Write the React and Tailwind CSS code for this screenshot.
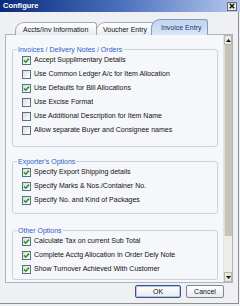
const groups = [
  {
    title: 'Invoices / Delivery Notes / Orders',
    mt: 'mt-[14px]',
    h: 'h-[98px]',
    rows: [
      ['Accept Supplimentary Details', true],
      ['Use Common Ledger A/c for Item Allocation', false],
      ['Use Defaults for Bill Allocations', true],
      ['Use Excise Format', false],
      ['Use Additional Description for Item Name', false],
      ['Allow separate Buyer and Consignee names', false],
    ],
  },
  {
    title: "Exporter's Options",
    mt: 'mt-[14px]',
    h: 'h-[53px]',
    rows: [
      ['Specify Export Shipping details', true],
      ['Specify Marks & Nos./Container No.', true],
      ['Specify No. and Kind of Packages', true],
    ],
  },
  {
    title: 'Other Options',
    mt: 'mt-[16px]',
    h: 'h-[50px]',
    rows: [
      ['Calculate Tax on current Sub Total', true],
      ['Complete Acctg Allocation In Order Dely Note', true],
      ['Show Turnover Achieved With Customer', true],
    ],
  },
];

const CheckBox = ({ checked }) => (
  <span className="w-[9px] h-[9px] border border-[#5a6f88] bg-gradient-to-br from-[#dcdcd6] to-white flex items-center justify-center shrink-0">
    {checked && (
      <svg width="7" height="7" viewBox="0 0 7 7">
        <path d="M1 3.4 L2.8 5.2 L6 1.6" stroke="#21a121" strokeWidth="1.6" fill="none" />
      </svg>
    )}
  </span>
);

const Group = ({ group }) => (
  <div className={`${group.mt} ${group.h} ml-[6px] w-[206px] border border-[#cdd1da] rounded-[3px]`}>
    <div className="-mt-[6px] ml-[4px] w-fit px-[1px] h-[11px] leading-[11px] bg-[#f6f7fa] text-[#2d5fc6]">
      {group.title}
    </div>
    <div className="-mt-[2px]">
      {group.rows.map(([label, checked]) => (
        <div key={label} className="h-[14px] flex items-center pl-[9px] gap-[3px] text-[#111]">
          <CheckBox checked={checked} />
          <span className="whitespace-nowrap">{label}</span>
        </div>
      ))}
    </div>
  </div>
);

const App = () => {
  return (
    <div className="w-[240px] h-[306px] bg-[#eef0f4] font-['Liberation_Sans',Arial,sans-serif] text-[7px] overflow-hidden">
      <div className="w-[239px] h-[304px] border-r border-b border-[#8e8e8e] flex flex-col">
        <div className="h-[12px] w-[240px] shrink-0 bg-gradient-to-r from-[#0a2a7c] via-[#4b6fbd] to-[#b7c9ec] flex items-center justify-between pl-[3px] pr-[3px]">
          <span className="text-white font-bold text-[7.5px]">Configure</span>
          <span className="w-[10px] h-[9px] bg-[#eceae4] border border-[#6b6b6b] flex items-center justify-center">
            <svg width="6" height="6" viewBox="0 0 6 6">
              <path d="M0.8 0.8 L5.2 5.2 M5.2 0.8 L0.8 5.2" stroke="#111" strokeWidth="1.4" />
            </svg>
          </span>
        </div>

        <div className="mt-[8px] h-[15px] shrink-0 flex items-end pl-[15px] relative z-10">
          <div className="h-[13px] w-[82px] border border-b-0 border-[#a4aab4] rounded-tl-[9px] rounded-tr-[3px] bg-gradient-to-b from-white to-[#e9ecf1] pl-[7px] leading-[13px] text-[#111]">
            Accts/Inv Information
          </div>
          <div className="h-[13px] w-[58px] -ml-[1px] border border-b-0 border-[#a4aab4] rounded-tl-[9px] rounded-tr-[3px] bg-gradient-to-b from-white to-[#e9ecf1] pl-[6px] leading-[13px] text-[#111]">
            Voucher Entry
          </div>
          <div className="h-[16px] w-[57px] -ml-[3px] border border-b-0 border-[#7f9db9] rounded-tl-[9px] rounded-tr-[3px] bg-gradient-to-b from-[#c2d3f1] to-[#d9e5f8] pl-[9px] leading-[16px] text-[#1b2f5e]">
            Invoice Entry
          </div>
        </div>

        <div className="ml-[5px] -mt-[1px] w-[228px] h-[249px] shrink-0 border border-[#aeb4be] bg-[#f6f7fa] flex">
          <div className="flex-1">
            {groups.map((g) => (
              <Group key={g.title} group={g} />
            ))}
          </div>
          <div className="w-[9px] flex flex-col border-l border-[#e4e2dc]">
            <div className="h-[10px] bg-[#e8e6e0] border border-[#b9b6ac] flex items-center justify-center">
              <svg width="5" height="3" viewBox="0 0 5 3">
                <path d="M0 3 L2.5 0 L5 3 Z" fill="#111" />
              </svg>
            </div>
            <div className="h-[191px] bg-[#c6c3b9] border-l border-[#e2e0d9]" />
            <div className="flex-1 bg-[#eeece6]" />
            <div className="h-[10px] bg-[#e8e6e0] border border-[#b9b6ac] flex items-center justify-center">
              <svg width="5" height="3" viewBox="0 0 5 3">
                <path d="M0 0 L2.5 3 L5 0 Z" fill="#111" />
              </svg>
            </div>
          </div>
        </div>

        <div className="mt-[2px] pl-[135px] flex gap-[5px]">
          <button className="w-[46px] h-[13px] rounded-[2px] border border-[#3e5576] bg-gradient-to-b from-white to-[#e8ebf0] shadow-[inset_0_0_0_1px_#a9c4ee] text-[#111] leading-[11px]">
            OK
          </button>
          <button className="w-[38px] h-[13px] rounded-[2px] border border-[#7c8796] bg-gradient-to-b from-white to-[#e8ebf0] text-[#111] leading-[11px]">
            Cancel
          </button>
        </div>
      </div>
    </div>
  );
};

export default App;
